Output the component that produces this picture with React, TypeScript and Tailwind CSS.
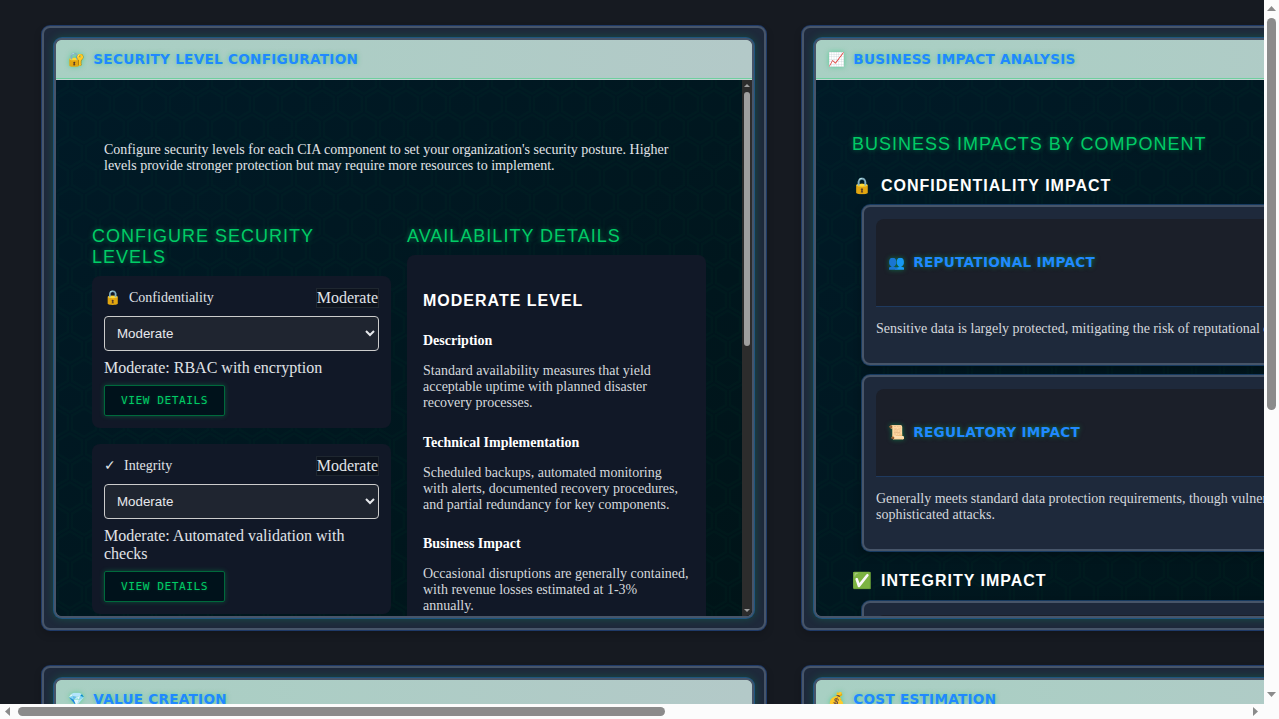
import type { ReactNode } from "react";

const HEX_PATH =
  "M13.99 9.25l13 7.5v15l-13 7.5L1 31.75v-15l12.99-7.5zM3 17.9v12.7l10.99 6.34 11-6.35V17.9l-11-6.34L3 17.9zM0 15l12.98-7.5V0h-2v6.35L0 12.69v2.3zm0 18.5L12.98 41v8h-2v-6.85L0 35.81v-2.3zM15 0v7.5L27.99 15H28v-2.31h-.01L17 6.35V0h-2zm0 49v-8l12.99-7.5H28v2.31h-.01L17 42.15V49h-2z";

function HexPattern({ id }: { id: string }) {
  return (
    <svg className="pointer-events-none absolute inset-0 h-full w-full" aria-hidden="true">
      <defs>
        <pattern id={id} width="28" height="49" patternUnits="userSpaceOnUse">
          <path d={HEX_PATH} fill="#00cc66" fillOpacity="0.02" fillRule="evenodd" />
        </pattern>
      </defs>
      <rect width="100%" height="100%" fill={`url(#${id})`} />
    </svg>
  );
}

function Widget({ id, icon, title, children }: { id: string; icon: string; title: string; children?: ReactNode }) {
  return (
    <div className="h-[604px] w-[724px] rounded-lg border-2 border-[#475569] bg-[#1e293b] p-2.5 shadow-[0_0_0_1px_#1f3a68,0_4px_8px_rgba(0,0,0,0.2)]">
      <section className="flex h-[580px] w-[700px] flex-col overflow-hidden rounded-lg border-2 border-[#475569] bg-[#00141e] shadow-[0_0_0_1px_#1f5580,0_0_10px_rgba(0,204,102,0.28)]">
        <header className="flex h-10 shrink-0 flex-col bg-[#c4d8d4]">
          <div className="flex h-[39px] items-center border-b border-[#70cfa0] bg-linear-to-r from-[#a8d0c3] to-[#b3c9c8] px-3">
            <WidgetTitle icon={icon} title={title} />
          </div>
        </header>
        <div className="relative flex min-h-0 grow bg-linear-to-br from-[#001a27] to-[#001418]">
          <HexPattern id={id} />
          <div className="relative flex min-w-0 grow">{children}</div>
        </div>
      </section>
    </div>
  );
}

function WidgetTitle({ icon, title }: { icon: string; title: string }) {
  return (
    <h2 className="flex items-center gap-2 font-['DejaVu_Sans'] text-[13.6px] leading-4 font-bold tracking-[0.27px] whitespace-nowrap text-[#2188ff] uppercase [text-shadow:0_0_5px_rgba(0,204,102,0.5)]">
      <span>{icon}</span>
      <span>{title}</span>
    </h2>
  );
}

function SectionHeading({ children }: { children: ReactNode }) {
  return (
    <h3 className="font-['Liberation_Sans'] text-lg leading-[21px] tracking-[1px] text-[#00cc66] uppercase [text-shadow:0_0_5px_rgba(0,204,102,0.5)]">
      {children}
    </h3>
  );
}

function LevelCard({ icon, name, summary }: { icon: string; name: string; summary: string }) {
  return (
    <div className="flex flex-col gap-2 rounded-lg bg-[#111827] p-3">
      <div className="flex h-5 items-center justify-between">
        <div className="flex items-center gap-2 text-sm leading-4">
          <span>{icon}</span>
          <span>{name}</span>
        </div>
        <span className="border border-[#1f2730] bg-[#0d131d] text-base leading-[18px]">Moderate</span>
      </div>
      <select
        defaultValue="Moderate"
        className="h-[35px] w-full rounded border border-[#cccccc] bg-[#1f2530] px-2 font-['Liberation_Sans'] text-[13.333px] text-[#e6e8ec]"
      >
        <option>Moderate</option>
      </select>
      <p className="text-base leading-[18px]">{summary}</p>
      <button className="h-[31px] w-[121px] rounded-xs border border-[#006a3c] bg-[#00121b] font-['DejaVu_Sans_Mono'] text-[11.2px] leading-[13px] tracking-[0.5px] whitespace-nowrap text-[#00cc66] uppercase shadow-[0_0_5px_rgba(0,204,102,0.3)] [text-shadow:0_0_3px_rgba(0,204,102,0.3)]">
        View Details
      </button>
    </div>
  );
}

function Detail({ title, text }: { title: string; text: string }) {
  return (
    <div className="text-sm leading-4">
      <h5 className="mb-3.5 font-bold text-white">{title}</h5>
      <p className="mb-[23.5px] text-[#d5d8dd]">{text}</p>
    </div>
  );
}

function PanelScrollbar() {
  return (
    <div className="flex w-2.5 shrink-0 flex-col items-center bg-[#2c2c2c] pt-1 pb-1">
      <svg width="6" height="3" viewBox="0 0 6 3">
        <path d="M0 3 3 0l3 3z" fill="#9f9f9f" />
      </svg>
      <div className="mt-[5px] h-[254px] w-1.5 rounded-full bg-[#9f9f9f]" />
      <svg className="mt-auto" width="6" height="3" viewBox="0 0 6 3">
        <path d="M0 0 3 3l3-3z" fill="#9f9f9f" />
      </svg>
    </div>
  );
}

function SecurityPanel() {
  return (
    <>
      <div className="min-w-0 grow overflow-hidden px-9 pt-[62px] text-[#e0e4e8]">
        <p className="px-3 text-sm leading-4 whitespace-nowrap">
          Configure security levels for each CIA component to set your organization's security posture. Higher
          <br />
          levels provide stronger protection but may require more resources to implement.
        </p>
        <div className="mt-[52px] grid grid-cols-2 items-start gap-4">
          <div>
            <SectionHeading>Configure Security Levels</SectionHeading>
            <div className="mt-2 flex flex-col gap-4">
              <LevelCard icon="🔒" name="Confidentiality" summary="Moderate: RBAC with encryption" />
              <LevelCard icon="✓" name="Integrity" summary="Moderate: Automated validation with checks" />
            </div>
          </div>
          <div>
            <SectionHeading>Availability Details</SectionHeading>
            <div className="mt-2 rounded-lg bg-[#111827] px-4 pt-[37px] pb-4">
              <h4 className="mb-[23px] font-['Liberation_Sans'] text-base leading-[18px] font-bold tracking-[1px] text-white uppercase">
                Moderate Level
              </h4>
              <Detail
                title="Description"
                text="Standard availability measures that yield acceptable uptime with planned disaster recovery processes."
              />
              <Detail
                title="Technical Implementation"
                text="Scheduled backups, automated monitoring with alerts, documented recovery procedures, and partial redundancy for key components."
              />
              <Detail
                title="Business Impact"
                text="Occasional disruptions are generally contained, with revenue losses estimated at 1-3% annually."
              />
            </div>
          </div>
        </div>
      </div>
      <PanelScrollbar />
    </>
  );
}

function ImpactHeading({ icon, title }: { icon: string; title: string }) {
  return (
    <h4 className="flex items-center gap-2 font-['Liberation_Sans'] text-base leading-[18px] font-bold tracking-[1px] text-white uppercase">
      <span>{icon}</span>
      <span>{title}</span>
    </h4>
  );
}

function ImpactCard({ icon, title, children }: { icon: string; title: string; children?: ReactNode }) {
  return (
    <div className="mx-2.5 rounded-lg border-2 border-[#475569] bg-[#1e293b] p-3 shadow-[0_0_0_1px_#173a60,0_4px_8px_rgba(0,0,0,0.3)]">
      <div className="flex h-[88px] items-center rounded-t-lg border-b border-[#1f3a5f] bg-[#1b1f29] px-3 pb-0.5">
        <WidgetTitle icon={icon} title={title} />
      </div>
      <p className="mt-3.5 mb-3.5 text-sm leading-4 whitespace-nowrap text-[#d5d8dd]">{children}</p>
    </div>
  );
}

function ImpactPanel() {
  return (
    <div className="min-w-0 grow overflow-hidden px-9 pt-[54px]">
      <SectionHeading>Business Impacts by Component</SectionHeading>
      <div className="mt-[22px] mb-2.5">
        <ImpactHeading icon="🔒" title="Confidentiality Impact" />
      </div>
      <div className="flex flex-col gap-2.5">
        <ImpactCard icon="👥" title="Reputational Impact">
          Sensitive data is largely protected, mitigating the risk of reputational damage.
        </ImpactCard>
        <ImpactCard icon="📜" title="Regulatory Impact">
          Generally meets standard data protection requirements, though vulnerable to
          <br />
          sophisticated attacks.
        </ImpactCard>
      </div>
      <div className="mt-[21px] mb-[11px]">
        <ImpactHeading icon="✅" title="Integrity Impact" />
      </div>
      <ImpactCard icon="⚙️" title="Operational Impact" />
    </div>
  );
}

function VerticalScrollbar() {
  return (
    <div className="flex flex-col items-center bg-[#fcfcfc] pt-[6px] pb-[7px]">
      <svg width="9" height="5" viewBox="0 0 9 5">
        <path d="M0 5 4.5 0 9 5z" fill="#8b8b8b" />
      </svg>
      <div className="mt-[7px] h-[392px] w-[9px] rounded-full bg-[#8b8b8b]" />
      <svg className="mt-auto" width="9" height="5" viewBox="0 0 9 5">
        <path d="M0 0 4.5 5 9 0z" fill="#8b8b8b" />
      </svg>
    </div>
  );
}

function HorizontalScrollbar() {
  return (
    <div className="flex items-center bg-[#fcfcfc] pr-[6px] pl-[5px]">
      <svg width="5" height="9" viewBox="0 0 5 9">
        <path d="M5 0 0 4.5 5 9z" fill="#8b8b8b" />
      </svg>
      <div className="ml-2 h-[9px] w-[647px] rounded-full bg-[#8b8b8b]" />
      <svg className="ml-auto" width="5" height="9" viewBox="0 0 5 9">
        <path d="M0 0 5 4.5 0 9z" fill="#8b8b8b" />
      </svg>
    </div>
  );
}

export default function App() {
  return (
    <div className="grid h-[719px] w-[1279px] grid-cols-[1264px_15px] grid-rows-[704px_15px] overflow-hidden bg-[#fcfcfc] font-['Liberation_Serif']">
      <main className="grid grid-cols-[724px_724px] content-start gap-9 overflow-hidden bg-[#161a21] pt-[26px] pl-[42px]">
        <Widget id="hex-security" icon="🔐" title="Security Level Configuration">
          <SecurityPanel />
        </Widget>
        <Widget id="hex-impact" icon="📈" title="Business Impact Analysis">
          <ImpactPanel />
        </Widget>
        <Widget id="hex-value" icon="💎" title="Value Creation" />
        <Widget id="hex-cost" icon="💰" title="Cost Estimation" />
      </main>
      <VerticalScrollbar />
      <HorizontalScrollbar />
    </div>
  );
}
